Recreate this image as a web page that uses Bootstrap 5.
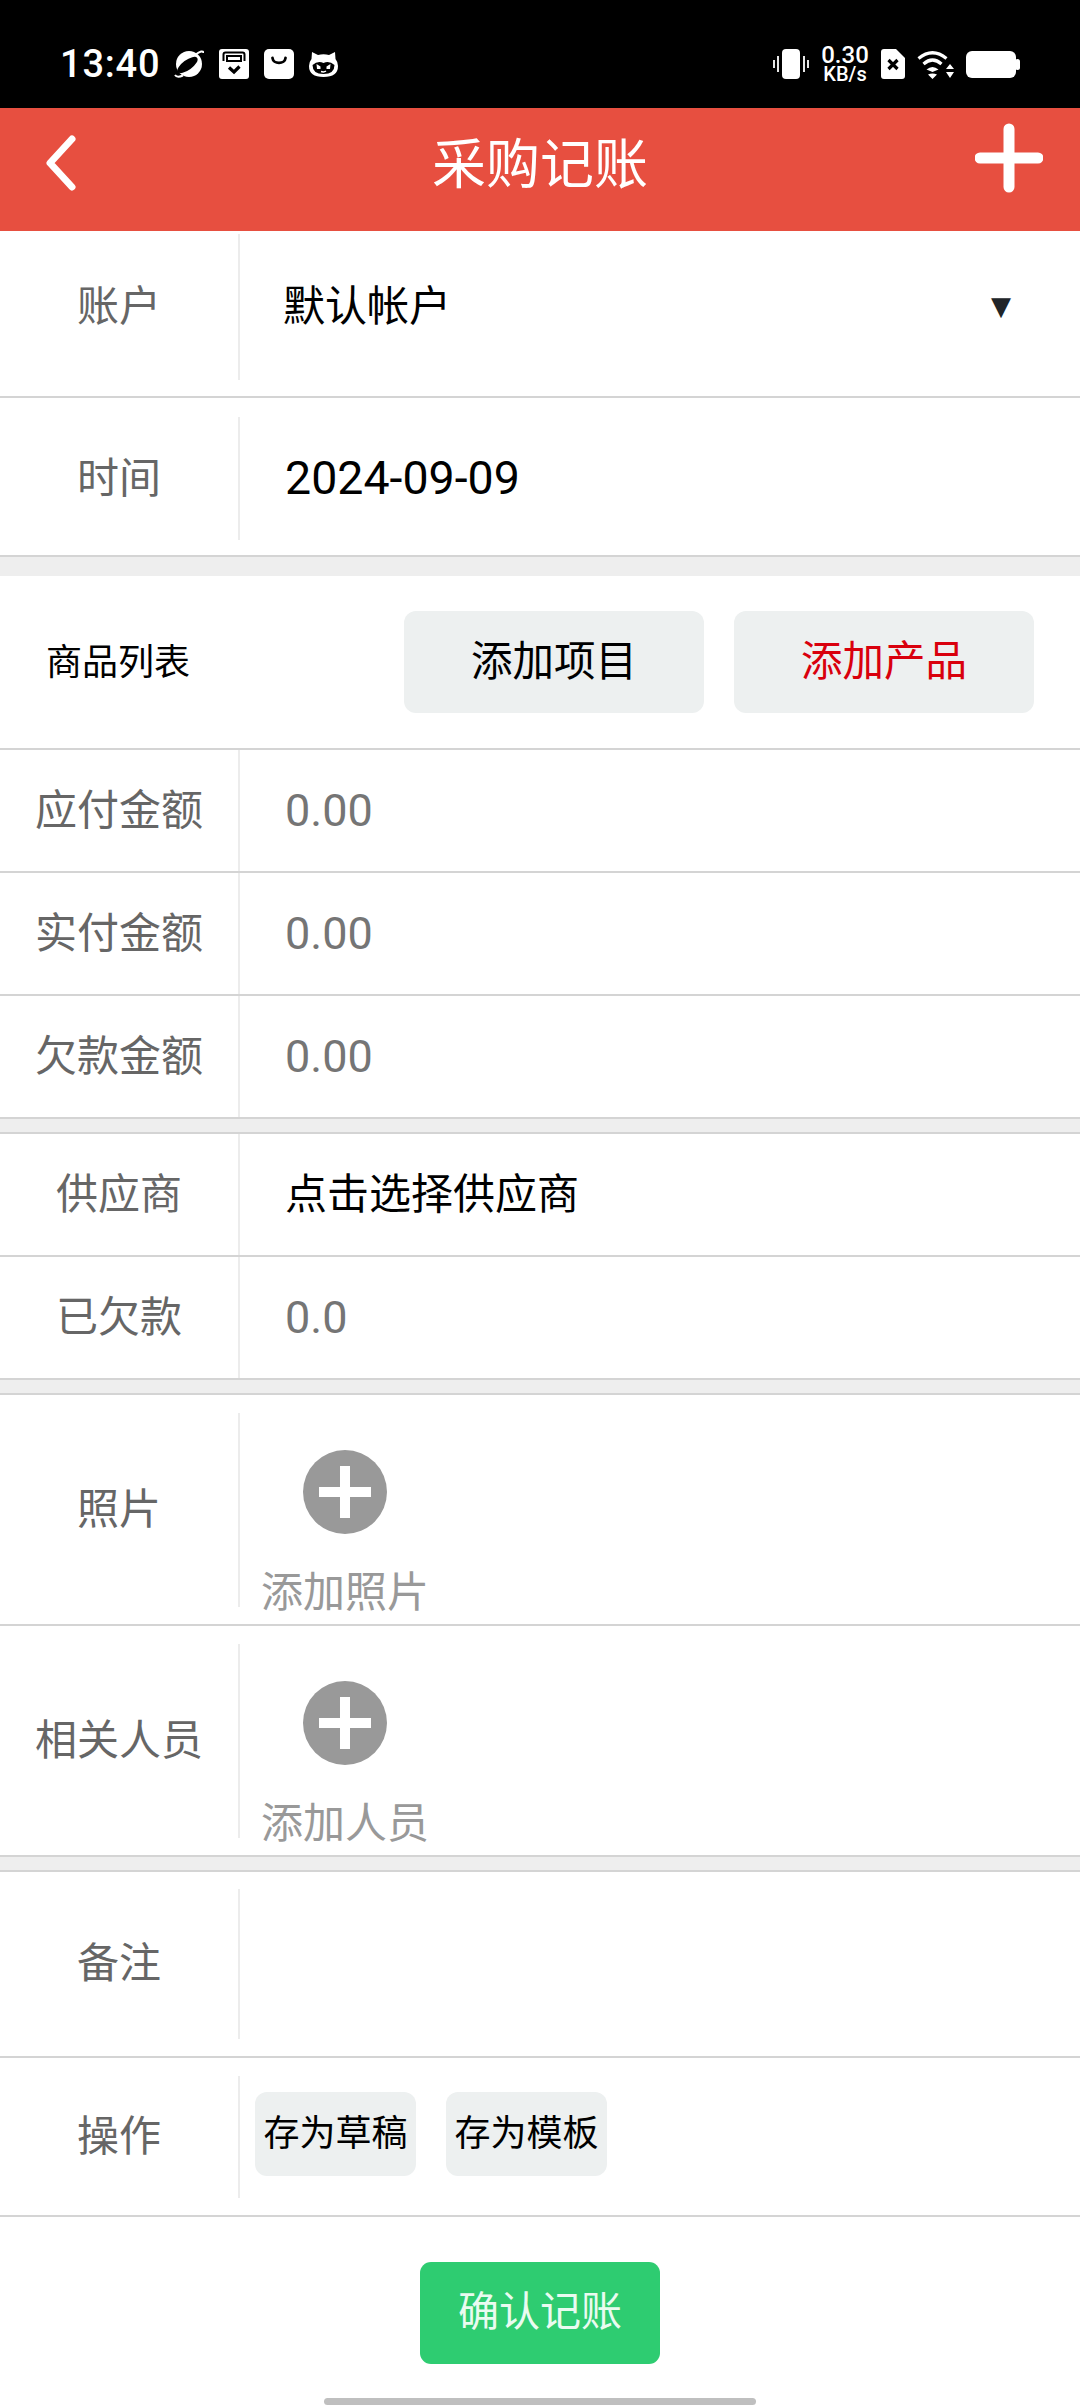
<!DOCTYPE html>
<html lang="zh-CN">
<head>
    <meta charset="UTF-8">
    <meta name="viewport" content="width=device-width, initial-scale=1.0">
    <title>采购记账</title>
    <link href="https://cdn.jsdelivr.net/npm/bootstrap@5.3.3/dist/css/bootstrap.min.css" rel="stylesheet">
    <style>
        html, body { height: 2408px; overflow: hidden; }
        body { width: 1080px; background: #fff; font-family: Roboto, "Noto Sans CJK SC", sans-serif; }
        .status-bar { height: 108px; background: #000; color: #fff; padding: 20px 60px 0 60px; }
        .clock { font-size: 38px; font-weight: 500; line-height: 1; width: 98px; margin-right: 16px; letter-spacing: .8px; }
        .left-icons { gap: 15px; }
        .right-icons { gap: 12px; }
        .speed { width: 48px; line-height: 1; text-align: center; font-weight: 500; }
        .speed b { display: block; font-size: 24px; font-weight: 500; height: 21px; line-height: 21px; }
        .speed i { display: block; font-size: 20px; font-style: normal; height: 17px; line-height: 17px; }
        .app-bar { height: 123px; background: #e74f40; color: #fff; }
        .app-title { font-size: 54px; line-height: 1; margin-top: -8px; }
        .back-link { left: 44px; top: 27px; }
        .plus-link { right: 37px; top: 15px; }
        .line-row { border-bottom: 2px solid #d4d4d4; }
        .band { background: #eee; height: 15px; }
        .band-tall { height: 19px; }
        .band-line { border-bottom: 2px solid #d4d4d4; }
        .field-label { width: 240px; flex: none; border-right: 2px solid #ececec; color: #666; font-size: 42px; line-height: 1; }
        .field-value { padding-left: 45px; font-size: 42px; line-height: 1; color: #000; }
        .field-value.date-num { font-size: 46.500px; }
        .field-value.muted-num { color: #757575; font-size: 45px; }
        .h-account { height: 167px; padding-bottom: 14px; } .h-account .field-label { height: 146px; }
        .h-account .field-value { padding-left: 43px; }
        .h-date { height: 159px; padding-top: 4px; } .h-date .field-label { height: 123px; }
        .h-std { height: 123px; } .h-std .field-label { height: 100%; }
        .h-pick { height: 231px; } .h-pick .field-label { height: 194px; }
        .h-note { height: 186px; } .h-note .field-label { height: 150px; }
        .h-ops { height: 159px; } .h-ops .field-label { height: 122px; }
        .h-goods { height: 174px; padding: 0 46px 0 46px; }
        .goods-title { font-size: 36px; line-height: 1; color: #000; padding-top: 2px; }
        .goods-btns { gap: 30px; }
        .soft-btn { background: #edf0f0; border: 0; border-radius: 12px; color: #000; padding: 0; }
        .soft-lg { width: 300px; height: 102px; font-size: 41.500px; }
        .soft-sm { width: 161px; height: 84px; font-size: 36px; }
        .ops-btns { gap: 30px; margin-left: 15px; margin-top: -6px; }
        .text-alert { color: #d9000d; }
        .arrow-mark { font-size: 26px; font-family: "DejaVu Sans", sans-serif; margin-right: 69px; }
        .pick-box { width: 168px; margin-left: 21px; color: #999; font-size: 42px; line-height: 1; align-self: flex-start; padding-top: 55px; }
        .pick-box svg { margin-bottom: 38px; }
        .foot-box { flex: 1; }
        .confirm-btn { width: 240px; height: 102px; background: #2ecc71; color: #e9fbf0; border: 0; border-radius: 11px; font-size: 41px; padding: 0; margin-top: 45px; }
        .home-bar { width: 432px; height: 7px; background: #bfbfbf; border-radius: 4px; bottom: 3px; left: 324px; }
    </style>
</head>
<body class="d-flex flex-column">
    <div class="status-bar d-flex align-items-center">
        <span class="clock">13:40</span>
        <div class="left-icons d-flex align-items-center flex-grow-1">
            <svg width="30" height="28" viewBox="0 0 30 28"><circle cx="15" cy="14" r="13" fill="#fff"/><ellipse cx="13.500" cy="15" rx="12" ry="5" transform="rotate(-36 13.500 15)" fill="#000"/><path d="M1 25 Q3 28 9 25.500 M21 5 Q29 -1 29.500 3" fill="none" stroke="#fff" stroke-width="2"/></svg>
            <svg width="30" height="30" viewBox="0 0 30 30"><rect width="30" height="30" rx="3" fill="#fff"/><path d="M4.500 12 V5.500 Q4.500 3.500 6.500 3.500 H23.500 Q25.500 3.500 25.500 5.500 V12" fill="none" stroke="#000" stroke-width="2"/><rect x="8" y="7" width="14" height="5" fill="none" stroke="#000" stroke-width="2"/><path d="M10 18.500 L15 23 L20.500 17.500" fill="none" stroke="#000" stroke-width="3.200"/></svg>
            <svg width="30" height="30" viewBox="0 0 30 30"><rect width="30" height="30" rx="5" fill="#fff"/><path d="M8.500 9 C9 15.500 21 15.500 21.500 9" fill="none" stroke="#000" stroke-width="2.800" stroke-linecap="round"/></svg>
            <svg width="29" height="25" viewBox="0 0 29 25"><path d="M3 0 L9 3 Q14.500 1.500 20 3 L26 0 L26.500 7 Q29 10 29 14 Q29 25 14.500 25 Q0 25 0 14 Q0 10 2.500 7 Z" fill="#fff"/><path d="M3.500 13 Q9 8 14.500 11 Q20 8 25.500 13 Q25.500 22 14.500 22 Q3.500 22 3.500 13 Z" fill="#000"/><path d="M7.500 12 L11.500 14.500 V17 H8 Z M21.500 12 L17.500 14.500 V17 H21 Z" fill="#fff"/><path d="M12 19.500 Q15 20.500 17 19" fill="none" stroke="#fff" stroke-width="1.500"/></svg>
        </div>
        <div class="right-icons d-flex align-items-center">
            <svg width="36" height="30" viewBox="0 0 36 30"><rect x="9" y="0" width="18" height="30" rx="4" fill="#fff"/><path d="M5 7 V23 M1 11 V19 M31 7 V23 M35 11 V19" stroke="#fff" stroke-width="1.800"/></svg>
            <span class="speed"><b>0.30</b><i>KB/s</i></span>
            <svg width="24" height="30" viewBox="0 0 24 30"><path d="M3 0 H15 L24 9 V27 Q24 30 21 30 H3 Q0 30 0 27 V3 Q0 0 3 0 Z" fill="#fff"/><path d="M7.500 11 L16.500 20 M16.500 11 L7.500 20" stroke="#000" stroke-width="3.200"/></svg>
            <svg width="37" height="29" viewBox="0 0 37 29"><path d="M1.500 8.500 Q15.500 -3 29.500 8.500 M6.500 14 Q15.500 6 24.500 14" fill="none" stroke="#fff" stroke-width="3.200"/><path d="M9.500 19.500 Q15.500 14.500 21.500 19.500 L15.500 22 Z M11 24.500 Q15.500 22.500 20 24.500 L15.500 29 Z" fill="#fff"/><path d="M33 14 L37 19 H29 Z M29 22 H37 L33 28 Z" fill="#fff"/></svg>
            <svg width="54" height="27" viewBox="0 0 54 27"><rect x="0" y="0" width="50" height="27" rx="6" fill="#fff"/><rect x="49" y="8" width="5" height="11" rx="2.500" fill="#fff"/></svg>
        </div>
    </div>

    <div class="app-bar d-flex align-items-center justify-content-center position-relative">
        <a class="back-link position-absolute d-block" href="#"><svg class="d-block" width="34" height="56" viewBox="0 0 34 56"><path d="M28 4 L6 28 L28 52" fill="none" stroke="#fff" stroke-width="7" stroke-linecap="round" stroke-linejoin="round"/></svg></a>
        <span class="app-title">采购记账</span>
        <a class="plus-link position-absolute d-block" href="#"><svg class="d-block" width="68" height="70" viewBox="0 0 68 70"><path d="M34 6 V64 M5 35 H63" stroke="#fff" stroke-width="11" stroke-linecap="round"/></svg></a>
    </div>

    <div class="line-row h-account d-flex align-items-center">
        <div class="field-label d-flex align-items-center justify-content-center">账户</div>
        <div class="field-value flex-grow-1">默认帐户</div>
        <span class="arrow-mark">▼</span>
    </div>
    <div class="line-row h-date d-flex align-items-center">
        <div class="field-label d-flex align-items-center justify-content-center">时间</div>
        <div class="field-value date-num">2024-09-09</div>
    </div>
    <div class="band band-tall"></div>
    <div class="line-row h-goods d-flex align-items-center">
        <div class="goods-title flex-grow-1">商品列表</div>
        <div class="goods-btns d-flex">
            <button type="button" class="soft-btn soft-lg">添加项目</button>
            <button type="button" class="soft-btn soft-lg text-alert">添加产品</button>
        </div>
    </div>
    <div class="line-row h-std d-flex align-items-center">
        <div class="field-label d-flex align-items-center justify-content-center">应付金额</div>
        <div class="field-value muted-num">0.00</div>
    </div>
    <div class="line-row h-std d-flex align-items-center">
        <div class="field-label d-flex align-items-center justify-content-center">实付金额</div>
        <div class="field-value muted-num">0.00</div>
    </div>
    <div class="line-row h-std d-flex align-items-center">
        <div class="field-label d-flex align-items-center justify-content-center">欠款金额</div>
        <div class="field-value muted-num">0.00</div>
    </div>
    <div class="band band-line"></div>
    <div class="line-row h-std d-flex align-items-center">
        <div class="field-label d-flex align-items-center justify-content-center">供应商</div>
        <div class="field-value">点击选择供应商</div>
    </div>
    <div class="line-row h-std d-flex align-items-center">
        <div class="field-label d-flex align-items-center justify-content-center">已欠款</div>
        <div class="field-value muted-num">0.0</div>
    </div>
    <div class="band band-line"></div>
    <div class="line-row h-pick d-flex align-items-center">
        <div class="field-label d-flex align-items-center justify-content-center">照片</div>
        <div class="pick-box d-flex flex-column align-items-center">
            <svg width="84" height="84" viewBox="0 0 84 84"><circle cx="42" cy="42" r="42" fill="#999"/><path d="M42 16 V68 M16 42 H68" stroke="#fff" stroke-width="10"/></svg>
            <span>添加照片</span>
        </div>
    </div>
    <div class="line-row h-pick d-flex align-items-center">
        <div class="field-label d-flex align-items-center justify-content-center">相关人员</div>
        <div class="pick-box d-flex flex-column align-items-center">
            <svg width="84" height="84" viewBox="0 0 84 84"><circle cx="42" cy="42" r="42" fill="#999"/><path d="M42 16 V68 M16 42 H68" stroke="#fff" stroke-width="10"/></svg>
            <span>添加人员</span>
        </div>
    </div>
    <div class="band band-line"></div>
    <div class="line-row h-note d-flex align-items-center">
        <div class="field-label d-flex align-items-center justify-content-center">备注</div>
    </div>
    <div class="line-row h-ops d-flex align-items-center">
        <div class="field-label d-flex align-items-center justify-content-center">操作</div>
        <div class="ops-btns d-flex">
            <button type="button" class="soft-btn soft-sm">存为草稿</button>
            <button type="button" class="soft-btn soft-sm">存为模板</button>
        </div>
    </div>
    <div class="foot-box d-flex justify-content-center align-items-start position-relative">
        <button type="button" class="confirm-btn">确认记账</button>
        <div class="home-bar position-absolute"></div>
    </div>
    <script src="https://cdn.jsdelivr.net/npm/bootstrap@5.3.3/dist/js/bootstrap.bundle.min.js"></script>
</body>
</html>
